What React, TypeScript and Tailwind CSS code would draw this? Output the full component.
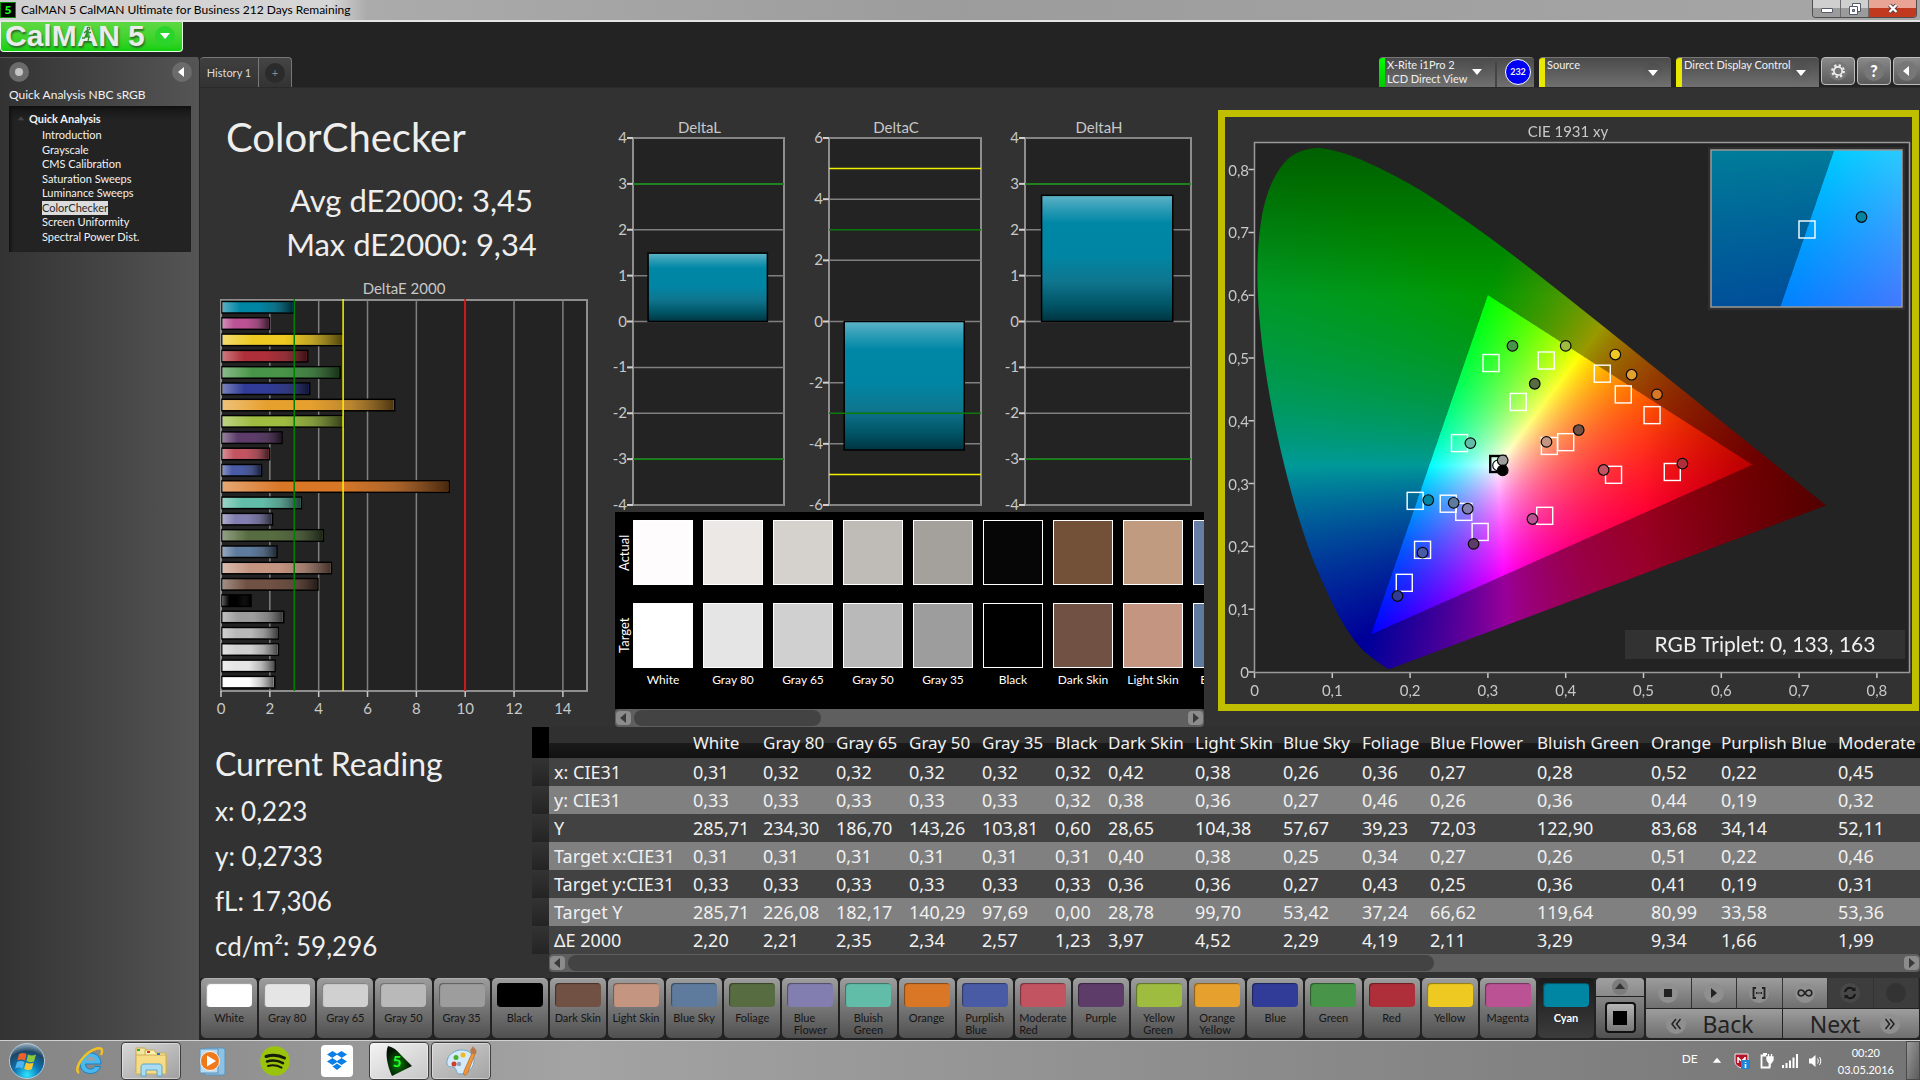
import React, { useEffect, useRef, useState } from 'react';

type Reading = { name: string; lines?: string[]; color: string; actual?: string; de: number };

const patches: Reading[] = [
  { name: 'White', color: '#ffffff', actual: '#fffcfd', de: 2.2 },
  { name: 'Gray 80', color: '#e5e5e5', actual: '#ece8e5', de: 2.21 },
  { name: 'Gray 65', color: '#d0d0d0', actual: '#d5d2cd', de: 2.35 },
  { name: 'Gray 50', color: '#b9b9b9', actual: '#bfbbb6', de: 2.34 },
  { name: 'Gray 35', color: '#9d9d9d', actual: '#a4a09b', de: 2.57 },
  { name: 'Black', color: '#000000', actual: '#060607', de: 1.23 },
  { name: 'Dark Skin', color: '#715143', actual: '#735138', de: 3.97 },
  { name: 'Light Skin', color: '#c49581', actual: '#c09b80', de: 4.52 },
  { name: 'Blue Sky', color: '#5e7b9d', actual: '#687da3', de: 2.29 },
  { name: 'Foliage', color: '#576c40', de: 4.19 },
  { name: 'Blue Flower', lines: ['Blue', 'Flower'], color: '#827fb0', de: 2.11 },
  { name: 'Bluish Green', lines: ['Bluish', 'Green'], color: '#62bda8', de: 3.29 },
  { name: 'Orange', color: '#d97727', de: 9.34 },
  { name: 'Purplish Blue', lines: ['Purplish', 'Blue'], color: '#4a5ba5', de: 1.66 },
  { name: 'Moderate Red', lines: ['Moderate', 'Red'], color: '#c25461', de: 1.99 },
  { name: 'Purple', color: '#5d3c6a', de: 2.5 },
  { name: 'Yellow Green', lines: ['Yellow', 'Green'], color: '#9dbc40', de: 5.02 },
  { name: 'Orange Yellow', lines: ['Orange', 'Yellow'], color: '#e6a02e', de: 7.11 },
  { name: 'Blue', color: '#303c97', de: 3.63 },
  { name: 'Green', color: '#489448', de: 4.87 },
  { name: 'Red', color: '#ae2f39', de: 3.55 },
  { name: 'Yellow', color: '#edc921', de: 5.0 },
  { name: 'Magenta', color: '#bb5294', de: 1.98 },
  { name: 'Cyan', color: '#0085a3', de: 2.96 },
];

const columns: [string, string, string, string, string, string, string, string][] = [
  ['White', '0,31', '0,33', '285,71', '0,31', '0,33', '285,71', '2,20'],
  ['Gray 80', '0,32', '0,33', '234,30', '0,31', '0,33', '226,08', '2,21'],
  ['Gray 65', '0,32', '0,33', '186,70', '0,31', '0,33', '182,17', '2,35'],
  ['Gray 50', '0,32', '0,33', '143,26', '0,31', '0,33', '140,29', '2,34'],
  ['Gray 35', '0,32', '0,33', '103,81', '0,31', '0,33', '97,69', '2,57'],
  ['Black', '0,32', '0,32', '0,60', '0,31', '0,33', '0,00', '1,23'],
  ['Dark Skin', '0,42', '0,38', '28,65', '0,40', '0,36', '28,78', '3,97'],
  ['Light Skin', '0,38', '0,36', '104,38', '0,38', '0,36', '99,70', '4,52'],
  ['Blue Sky', '0,26', '0,27', '57,67', '0,25', '0,27', '53,42', '2,29'],
  ['Foliage', '0,36', '0,46', '39,23', '0,34', '0,43', '37,24', '4,19'],
  ['Blue Flower', '0,27', '0,26', '72,03', '0,27', '0,25', '66,62', '2,11'],
  ['Bluish Green', '0,28', '0,36', '122,90', '0,26', '0,36', '119,64', '3,29'],
  ['Orange', '0,52', '0,44', '83,68', '0,51', '0,41', '80,99', '9,34'],
  ['Purplish Blue', '0,22', '0,19', '34,14', '0,22', '0,19', '33,58', '1,66'],
  ['Moderate Red', '0,45', '0,32', '52,11', '0,46', '0,31', '53,36', '1,99'],
];
const colWidths = [17, 139, 70, 73, 73, 73, 73, 53, 87, 88, 79, 68, 107, 114, 70, 117, 119];
const rowNames = ['x: CIE31', 'y: CIE31', 'Y', 'Target x:CIE31', 'Target y:CIE31', 'Target Y', 'ΔE 2000'];

const locus: [number, number][] = [
  [0.1741, 0.005], [0.1714, 0.0051], [0.1644, 0.0109], [0.1566, 0.0177], [0.144, 0.0297], [0.1355, 0.0399],
  [0.1241, 0.0578], [0.1096, 0.0868], [0.0913, 0.1327], [0.0687, 0.2007], [0.0454, 0.295], [0.0235, 0.4127],
  [0.0082, 0.5384], [0.0039, 0.6548], [0.0139, 0.7502], [0.0389, 0.812], [0.0743, 0.8338], [0.1142, 0.8262],
  [0.1547, 0.8059], [0.1929, 0.7816], [0.2296, 0.7543], [0.3016, 0.6923], [0.3731, 0.6245], [0.4441, 0.5547],
  [0.5125, 0.4866], [0.5752, 0.4242], [0.627, 0.3725], [0.6915, 0.3083], [0.719, 0.2809], [0.7347, 0.2653],
];

const targets: [number, number][] = [
  [0.304, 0.492], [0.375, 0.496], [0.339, 0.43], [0.447, 0.475], [0.474, 0.442], [0.511, 0.409],
  [0.2635, 0.3645], [0.379, 0.36], [0.4, 0.366], [0.4615, 0.314], [0.537, 0.3185], [0.2065, 0.2725],
  [0.249, 0.268], [0.269, 0.255], [0.29, 0.223], [0.373, 0.2487], [0.216, 0.1945], [0.1925, 0.142],
];
const measured: [number, number, string][] = [
  [0.3316, 0.5193, '#489448'], [0.4, 0.5193, '#9dbc40'], [0.4638, 0.5055, '#edc921'], [0.4847, 0.4734, '#e6a02e'],
  [0.5173, 0.442, '#d97727'], [0.3602, 0.459, '#576c40'], [0.2775, 0.3645, '#62bda8'], [0.3753, 0.3664, '#c49581'],
  [0.4167, 0.3853, '#715143'], [0.4487, 0.3217, '#c25461'], [0.55, 0.3317, '#ae2f39'], [0.2234, 0.2738, '#0085a3'],
  [0.256, 0.2694, '#5e7b9d'], [0.274, 0.26, '#827fb0'], [0.2816, 0.204, '#5d3c6a'], [0.3573, 0.2436, '#bb5294'],
  [0.216, 0.19, '#4a5ba5'], [0.1838, 0.121, '#303c97'], [0.313, 0.329, '#ffffff'], [0.319, 0.337, '#9d9d9d'],
  [0.319, 0.321, '#000000'],
];

/* ---------- CIE colour field ---------- */

const X0 = 29.5;
const Y0 = 555;
const SX = 778;
const SY = 628;
const px = (x: number) => X0 + x * SX;
const py = (y: number) => Y0 - y * SY;

function side(ax: number, ay: number, bx: number, by: number, x: number, y: number) {
  return (bx - ax) * (y - ay) - (by - ay) * (x - ax);
}

function chromaColor(x: number, y: number): [number, number, number] {
  const X = x / y;
  const Z = (1 - x - y) / y;
  const r = Math.max(0, 3.2406 * X - 1.5372 - 0.4986 * Z);
  const g = Math.max(0, -0.9689 * X + 1.8758 + 0.0415 * Z);
  const b = Math.max(0, 0.0557 * X - 0.204 + 1.057 * Z);
  const inside =
    side(0.15, 0.06, 0.64, 0.33, x, y) > 0 &&
    side(0.64, 0.33, 0.3, 0.6, x, y) > 0 &&
    side(0.3, 0.6, 0.15, 0.06, x, y) > 0;
  let k = inside ? 255 : 153;
  k *= 1 - Math.max(0, x - 0.5) * 2;
  k *= 1 - Math.max(0, y - 0.6) * 1.6;
  const m = Math.max(r, g, b) || 1;
  return [(r / m) * k, (g / m) * k, (b / m) * k];
}

function paintField(
  ctx: CanvasRenderingContext2D,
  left: number, top: number, w: number, h: number,
  toX: (u: number) => number, toY: (v: number) => number, clip: boolean,
) {
  const s = 2;
  const off = document.createElement('canvas');
  off.width = w * s;
  off.height = h * s;
  const o = off.getContext('2d')!;
  const img = o.createImageData(off.width, off.height);
  for (let j = 0; j < off.height; j++) {
    const y = Math.max(0.001, toY(top + (j + 0.5) / s));
    for (let i = 0; i < off.width; i++) {
      const c = chromaColor(toX(left + (i + 0.5) / s), y);
      const p = (j * off.width + i) * 4;
      img.data[p] = c[0];
      img.data[p + 1] = c[1];
      img.data[p + 2] = c[2];
      img.data[p + 3] = 255;
    }
  }
  o.putImageData(img, 0, 0);
  if (clip) {
    o.globalCompositeOperation = 'destination-in';
    o.setTransform(s, 0, 0, s, -left * s, -top * s);
    const q = locus.map(([a, b]) => [px(a), py(b)]);
    o.beginPath();
    o.moveTo(q[0][0], q[0][1]);
    for (let i = 0; i < q.length - 1; i++) {
      const a = q[Math.max(0, i - 1)], b = q[i], c = q[i + 1], d = q[Math.min(q.length - 1, i + 2)];
      o.bezierCurveTo(
        b[0] + (c[0] - a[0]) / 6, b[1] + (c[1] - a[1]) / 6,
        c[0] - (d[0] - b[0]) / 6, c[1] - (d[1] - b[1]) / 6, c[0], c[1],
      );
    }
    o.closePath();
    o.fill();
  }
  ctx.drawImage(off, left, top, w, h);
}

function CieChart() {
  const ref = useRef<HTMLCanvasElement>(null);
  useEffect(() => {
    const ctx = ref.current!.getContext('2d')!;
    ctx.setTransform(2, 0, 0, 2, 0, 0);
    ctx.fillStyle = '#232323';
    ctx.fillRect(30, 26, 654, 529);
    paintField(ctx, 30, 26, 600, 529, (u) => (u - X0) / SX, (v) => (Y0 - v) / SY, true);
    ctx.fillStyle = '#2f2f2f';
    ctx.fillRect(483, 30, 197, 163);
    paintField(ctx, 486, 33, 191, 157, (u) => 0.208 + (u - 581.5) / 3300, (v) => 0.2695 - (v - 112) / 2670, false);
  }, []);
  const ticks = [0, 1, 2, 3, 4, 5, 6, 7, 8];
  const label = (t: number) => (t ? `0,${t}` : '0');
  return (
    <div className="relative border-[7px] border-[#bfbf00] bg-[#323232]">
      <canvas ref={ref} width={1374} height={1174} className="absolute inset-0 h-full w-full" />
      <svg viewBox="0 0 687 587" className="relative block h-auto w-full" role="img" aria-label="CIE 1931 xy chart">
        <g fill="#c8c8c8" fontSize="15">
          <text x="343" y="20" textAnchor="middle">CIE 1931 xy</text>
          {ticks.map((t) => (
            <g key={t}>
              <text x={px(t / 10)} y="579" textAnchor="middle">{label(t)}</text>
              <text x="24" y={py(t / 10) + 6} textAnchor="end">{label(t)}</text>
              <path d={`M${px(t / 10)} 555v6M${X0} ${py(t / 10)}h-6`} stroke="#c8c8c8" strokeWidth="1.5" />
            </g>
          ))}
        </g>
        <rect x="29.5" y="25.5" width="655" height="530" fill="none" stroke="#9a9a9a" strokeWidth="1.5" />
        <rect x="486" y="33" width="191" height="157" fill="none" stroke="#9a9a9a" strokeWidth="1.5" />
        <g fill="none" stroke="#fff" strokeWidth="1.4">
          {targets.map(([x, y]) => (
            <rect key={`${x}-${y}`} x={px(x) - 8} y={py(y) - 8.5} width="16" height="17" />
          ))}
          <rect x="574" y="104" width="16" height="17" />
        </g>
        <rect x={px(0.312) - 7} y={py(0.332) - 7.5} width="15" height="16" fill="none" stroke="#000" strokeWidth="2.4" />
        <g stroke="#0a0a0a" strokeWidth="1.2">
          {measured.map(([x, y, c]) => (
            <circle key={`${x}-${y}`} cx={px(x)} cy={py(y)} r="5.3" fill={c} />
          ))}
          <circle cx="636.5" cy="100" r="5.3" fill="#0085a3" />
        </g>
        <rect x="400" y="513" width="280" height="29" fill="#323232" />
        <text x="540" y="535" textAnchor="middle" fontSize="21" fill="#f0f0f0">RGB Triplet: 0, 133, 163</text>
      </svg>
    </div>
  );
}

/* ---------- Bar charts ---------- */

function DeltaEChart() {
  const k = 24.42;
  const list = [...patches].reverse();
  return (
    <svg viewBox="0 0 405 455" className="block h-auto w-full" role="img" aria-label="DeltaE 2000 chart">
      <defs>
        <linearGradient id="shadeX">
          <stop offset="0" stopColor="#fff" stopOpacity=".36" />
          <stop offset=".26" stopColor="#fff" stopOpacity="0" />
          <stop offset=".52" stopColor="#333" stopOpacity="0" />
          <stop offset=".75" stopColor="#333" stopOpacity=".25" />
          <stop offset="1" stopColor="#000" stopOpacity=".66" />
        </linearGradient>
      </defs>
      <text x="204" y="25" textAnchor="middle" fontSize="15" fill="#c8c8c8">DeltaE 2000</text>
      <rect x="21" y="31" width="366" height="391" fill="#232323" stroke="#8e8e8e" strokeWidth="2" />
      {[2, 4, 6, 8, 10, 12, 14].map((t) => (
        <path key={t} d={`M${21 + t * k} 31v391`} stroke="#808080" strokeWidth="1.5" />
      ))}
      {[0, 2, 4, 6, 8, 10, 12, 14].map((t) => (
        <g key={t}>
          <path d={`M${21 + t * k} 422v6`} stroke="#c8c8c8" strokeWidth="1.5" />
          <text x={21 + t * k} y="445" textAnchor="middle" fontSize="15" fill="#c8c8c8">{t}</text>
        </g>
      ))}
      {list.map((p, i) => (
        <g key={p.name}>
          <rect x="22" y={32.5 + i * 16.3} width={p.de * k - 1} height="11.5" fill={p.color} stroke="#000" strokeWidth="1.5" />
          <rect x="22" y={33.2 + i * 16.3} width={p.de * k - 2} height="10" fill="url(#shadeX)" />
        </g>
      ))}
      <path d={`M${21 + 3 * k} 30v392`} stroke="#008000" strokeWidth="1.5" />
      <path d={`M${21 + 5 * k} 30v392`} stroke="#f6f600" strokeWidth="1.5" />
      <path d={`M${21 + 10 * k} 30v392`} stroke="#f00808" strokeWidth="1.8" />
    </svg>
  );
}

function DeltaChart({ title, width, plot, max, step, value, limits }: {
  title: string; width: number; plot: number; max: number; step: number; value: number; limits: [number, string][];
}) {
  const left = 28;
  const top = 25;
  const h = 367;
  const at = (v: number) => top + ((max - v) / (2 * max)) * h;
  const ticks: number[] = [];
  for (let v = max; v >= -max; v -= step) ticks.push(v);
  const y = Math.min(at(value), at(0));
  const bh = Math.abs(at(value) - at(0));
  const id = `shade-${title}`;
  return (
    <svg viewBox={`0 0 ${width} 399`} className="block h-auto w-full overflow-visible" role="img" aria-label={`${title} chart`}>
      <defs>
        <linearGradient id={id} x2="0" y2="1">
          <stop offset="0" stopColor="#5fb3c6" />
          <stop offset=".1" stopColor="#2f9db6" />
          <stop offset=".22" stopColor="#0087a6" />
          <stop offset=".48" stopColor="#0086a4" />
          <stop offset=".68" stopColor="#0f768f" />
          <stop offset=".88" stopColor="#005263" />
          <stop offset="1" stopColor="#003440" />
        </linearGradient>
      </defs>
      <text x={left + plot / 2 - 9} y="20" textAnchor="middle" fontSize="15" fill="#c8c8c8">{title}</text>
      <rect x={left} y={top} width={plot} height={h} fill="#232323" stroke="#8e8e8e" strokeWidth="2" />
      {ticks.map((v) => (
        <g key={v}>
          <path d={`M${left} ${at(v)}h${plot}`} stroke="#808080" strokeWidth="1.5" />
          <path d={`M${left} ${at(v)}h-6`} stroke="#d0d0d0" strokeWidth="2" />
          <text x={left - 6} y={at(v) + 5} textAnchor="end" fontSize="15" fill="#c8c8c8">{v}</text>
        </g>
      ))}
      <rect x={left + plot * 0.1} y={y} width={plot * 0.79} height={bh} fill={`url(#${id})`} stroke="#000" strokeWidth="1.5" />
      {limits.map(([v, c]) => (
        <path key={v} d={`M${left} ${at(v)}h${plot}`} stroke={c} strokeWidth="1.5" />
      ))}
    </svg>
  );
}

/* ---------- Small parts ---------- */

function Caret({ dir, className }: { dir: 'left' | 'right' | 'up' | 'down'; className?: string }) {
  const d = { left: 'M8 1 2 6l6 5z', right: 'M3 1l6 5-6 5z', up: 'M1 8l5-6 5 6z', down: 'M1 3h10L6 9z' }[dir];
  return (
    <svg viewBox="0 0 12 12" className={`size-3 fill-current ${className ?? ''}`} aria-hidden="true">
      <path d={d} />
    </svg>
  );
}

function ScrollBar({ thumb, label }: { thumb: string; label: string }) {
  const cap = 'flex h-[14px] w-[15px] shrink-0 items-center justify-center rounded bg-[#8c8c8c] text-[#3a3a3a]';
  return (
    <div className="flex h-[18px] items-center gap-[3px] rounded-sm bg-[#5f5f5f] px-px" aria-label={label}>
      <button className={cap} aria-label="Scroll left"><Caret dir="left" /></button>
      <div className="flex-1">
        <div className={`h-4 rounded-lg bg-[#434343] ${thumb}`} />
      </div>
      <button className={cap} aria-label="Scroll right"><Caret dir="right" /></button>
    </div>
  );
}

function RoundCaret() {
  return (
    <span className="flex size-5 shrink-0 items-center justify-center rounded-full bg-linear-to-b from-[#4d4d4d] to-[#6a6a6a] text-white">
      <Caret dir="down" />
    </span>
  );
}

function TitleBar() {
  return (
    <header className="flex h-[22px] items-start justify-between border-b-2 border-[#e4e4e4] bg-linear-to-r from-[#b4b4b4] via-[#9c9c9c] to-[#a6a6a6]">
      <div className="flex h-full items-center gap-[5px] bg-linear-to-r from-[#cfcfcf] via-[#d6d6d6] via-90% to-[#b0b0b0]/0 pr-4 text-xs text-black">
        <span className="flex size-4 items-center justify-center bg-black text-xs leading-4 font-black text-[#19ff19] ring-1 ring-[#0b8f0b] ring-inset">5</span>
        CalMAN 5 CalMAN Ultimate for Business 212 Days Remaining
      </div>
      <div className="mr-[3px] flex h-[18px] overflow-hidden rounded-b border border-t-0 border-[#4e4e4e]">
        <button aria-label="Minimize" className="flex w-7 items-center justify-center border-r border-[#6a6a6a] bg-linear-to-b from-[#cfcfcf] from-50% to-[#9b9b9b] to-50%">
          <span className="mt-1 h-[5px] w-3 rounded-[1px] border border-[#555a6c] bg-white" />
        </button>
        <button aria-label="Restore" className="flex w-7 items-center justify-center border-r border-[#6a6a6a] bg-linear-to-b from-[#cfcfcf] from-50% to-[#9b9b9b] to-50%">
          <svg viewBox="0 0 14 12" className="h-3 w-3.5" fill="#fff" stroke="#555a6c">
            <path d="M4.5.5h8v8h-8z" />
            <path d="M1.5 3.5h8v8h-8z" />
            <path d="M4.5 6.5h2v2h-2z" fill="#9b9b9b" />
          </svg>
        </button>
        <button aria-label="Close" className="flex w-[47px] items-center justify-center bg-linear-to-b from-[#e9a495] from-45% to-[#c13a1f] to-50%">
          <svg viewBox="0 0 12 11" className="h-[11px] w-3">
            <path d="M2.5 2l7 7M9.5 2l-7 7" stroke="#5a3a3a" strokeWidth="4" />
            <path d="M2.5 2l7 7M9.5 2l-7 7" stroke="#fff" strokeWidth="2.4" />
          </svg>
        </button>
      </div>
    </header>
  );
}

const treeItems = ['Introduction', 'Grayscale', 'CMS Calibration', 'Saturation Sweeps', 'Luminance Sweeps', 'ColorChecker', 'Screen Uniformity', 'Spectral Power Dist.'];

function Sidebar() {
  const [active, setActive] = useState('ColorChecker');
  return (
    <aside className="w-[200px] shrink-0 rounded-tr border-t border-r border-t-[#555] border-r-[#262626] bg-linear-to-r from-[#333] to-[#555] px-[9px] pt-1 text-[11px] text-[#f2f2f2]">
      <div className="-mr-0.5 flex items-center justify-between">
        <button aria-label="Options" className="flex size-5 items-center justify-center rounded-full bg-[#6b6b6b]">
          <span className="size-2 rounded-full bg-[#c4c4c4]" />
        </button>
        <button aria-label="Collapse panel" className="flex size-5 items-center justify-center rounded-full bg-[#6b6b6b] text-white"><Caret dir="left" /></button>
      </div>
      <h2 className="mt-0.5 text-[12px] leading-[22px]">Quick Analysis NBC sRGB</h2>
      <nav className="-mr-px h-[146px] bg-linear-to-b from-[#151515] to-[#232323] to-10% pt-1.5 shadow-[inset_2px_2px_3px_#111]">
        <div className="flex items-center font-bold">
          <Caret dir="up" className="mr-1 ml-2 size-2! text-[#444]" />
          <span className="leading-[14px]">Quick Analysis</span>
        </div>
        <ul className="mt-0.5 ml-[33px] flex h-[116px] flex-col justify-between">
          {treeItems.map((t) => (
            <li key={t} className="flex">
              <button onClick={() => setActive(t)} className={t === active ? 'bg-[#dcdcdc] leading-[14px] text-[#2a2a2a]' : 'leading-[14px]'}>{t}</button>
            </li>
          ))}
        </ul>
      </nav>
    </aside>
  );
}

function Device({ width, bar, children }: { width: string; bar: string; children: React.ReactNode }) {
  return (
    <div className={`flex h-[30px] items-start overflow-hidden rounded-t border-t border-[#777] bg-linear-to-b from-[#4b4b4b] to-[#707070] ${width}`}>
      <span className={`mr-0.5 h-full w-1.5 shrink-0 ${bar}`} />
      {children}
    </div>
  );
}

function TabRow() {
  const square = 'flex h-7 w-[34px] shrink-0 items-center justify-center rounded border border-[#bdbdbd] bg-linear-to-b from-[#8a8a8a] to-[#5a5a5a] text-white';
  return (
    <div className="flex h-[31px] items-start justify-between overflow-hidden border-b border-[#2a2a2a] bg-[#232323] text-[11px] leading-[14px] text-[#f0f0f0]">
      <div className="flex h-full" role="tablist">
        <button role="tab" aria-selected="true" className="w-[59px] rounded-tl border-t border-r border-[#777] bg-linear-to-b from-[#3f3f3f] to-[#333] text-center text-[#dcdcdc]">History 1</button>
        <button aria-label="Add history" className="flex w-[33px] items-center justify-center rounded-tr border-t border-r border-[#777] bg-linear-to-b from-[#454545] to-[#333]">
          <span className="flex size-5 items-center justify-center rounded-full bg-[#2b2b2b] text-[#8c8c8c]">+</span>
        </button>
      </div>
      <div className="flex">
        <Device width="w-[155px]" bar="bg-linear-to-b from-[#00ff00] to-[#00c800]">
          <span className="w-[90px]">X-Rite i1Pro 2<br />LCD Direct View</span>
          <span className="mt-1 -ml-2.5"><RoundCaret /></span>
          <span className="mt-1 ml-2 h-full w-0.5 bg-[#444]" />
          <span className="mt-px ml-2 flex size-[26px] items-center justify-center rounded-full border border-white bg-[#0000f5] text-[9px] font-bold">232</span>
        </Device>
        <span className="w-[5px]" />
        <Device width="w-[132px]" bar="bg-[#e8e800]">
          <span className="flex-1">Source</span>
          <span className="mt-[5px] mr-2"><RoundCaret /></span>
        </Device>
        <span className="w-[5px]" />
        <Device width="w-[143px]" bar="bg-[#e8e800]">
          <span className="flex-1 whitespace-nowrap">Direct Display Control</span>
          <span className="mt-[5px] mr-2"><RoundCaret /></span>
        </Device>
        <div className="ml-0.5 flex gap-0.5">
          <button className={square} aria-label="Settings">
            <svg viewBox="0 0 20 20" className="size-5" fill="none" stroke="#f0f0f0">
              <circle cx="10" cy="10" r="9.5" fill="#777" stroke="none" />
              <circle cx="10" cy="10" r="4.2" strokeWidth="1.7" />
              <circle cx="10" cy="10" r="5.9" strokeWidth="2" strokeDasharray="2.3 2.33" />
            </svg>
          </button>
          <button className={square} aria-label="Help">
            <span className="flex size-5 items-center justify-center rounded-full bg-[#777] text-base font-black">?</span>
          </button>
          <button className="-mr-[7px] flex h-7 w-[34px] shrink-0 items-center justify-center rounded border border-[#bdbdbd] bg-linear-to-b from-[#8a8a8a] to-[#5a5a5a] pr-1.5 text-white" aria-label="Collapse">
            <span className="flex size-5 items-center justify-center rounded-full bg-[#777]"><Caret dir="left" /></span>
          </button>
        </div>
      </div>
    </div>
  );
}

function SwatchPanel() {
  return (
    <div className="ml-2.5">
      <div className="relative h-[197px] overflow-hidden bg-black text-[12px] text-white">
        <div className="flex gap-2.5 pt-2 whitespace-nowrap">
          <div className="-mr-2.5 flex w-[18px] shrink-0 flex-col gap-[18px]">
            {['Actual', 'Target'].map((t) => (
              <span key={t} className="flex h-[65px] rotate-180 items-center justify-center text-[13px] leading-[18px] [writing-mode:vertical-rl]">{t}</span>
            ))}
          </div>
          {patches.slice(0, 9).map((p) => (
            <div key={p.name} className="w-[60px] shrink-0">
              <div className="h-[65px] border border-white" style={{ backgroundColor: p.actual }} />
              <div className="mt-[18px] h-[65px] border border-white" style={{ backgroundColor: p.color }} />
              <div className="mt-0.5 text-center leading-5">{p.name}</div>
            </div>
          ))}
        </div>
      </div>
      <ScrollBar thumb="w-[34%]" label="Swatches" />
    </div>
  );
}

function DataTable() {
  return (
    <div className="min-w-0 flex-1">
      <div className="overflow-hidden">
        <table className="w-[1420px] table-fixed border-collapse font-['Noto_Sans',sans-serif] text-[17px] whitespace-nowrap text-[#f0f0f0]">
          <colgroup>
            {colWidths.map((w, i) => <col key={i} style={{ width: w }} />)}
          </colgroup>
          <thead>
            <tr className="h-[31px] bg-linear-to-b from-[#303030] from-50% via-[#1b1b1b] via-50% to-[#111]">
              <td className="bg-black p-0" />
              <td className="p-0" />
              {columns.map((c) => (
                <th key={c[0]} scope="col" className="p-0 pl-[5px] text-left text-[17px] leading-7 font-normal">{c[0]}</th>
              ))}
            </tr>
          </thead>
          <tbody>
            {rowNames.map((r, i) => (
              <tr key={r} className={i % 2 ? 'h-7 bg-[#808080]' : 'h-7 bg-[#424242]'}>
                <td className="bg-linear-to-b from-[#333] to-[#242424] p-0" />
                <th scope="row" className="p-0 pl-[5px] text-left text-[18px] leading-7 font-normal">{r}</th>
                {columns.map((c) => <td key={c[0]} className="p-0 pl-[5px] text-[18px] leading-7">{c[i + 1]}</td>)}
              </tr>
            ))}
          </tbody>
        </table>
      </div>
      <div className="ml-[17px]"><ScrollBar thumb="w-[65%]" label="Results" /></div>
    </div>
  );
}

function PatchStrip() {
  const [selected, setSelected] = useState('Cyan');
  const cell = 'flex h-[30px] flex-1 items-center justify-center border-r border-[#333]';
  const live = 'bg-linear-to-b from-[#9d9d9d] to-[#6f6f6f] text-[#222]';
  const knob = 'flex size-5 items-center justify-center rounded-full bg-[#8f8f8f]';
  return (
    <div className="flex h-[62px] gap-0.5 bg-[#222] pr-px pb-[2px] pl-px">
      <div className="flex flex-1 gap-0.5">
        {patches.map((p) => (
          <button
            key={p.name}
            onClick={() => setSelected(p.name)}
            className={`flex min-w-0 flex-1 flex-col items-center rounded-[5px] border-t pt-1 text-[11px] leading-3 ${
              p.name === selected
                ? 'border-[#1c1c1c] bg-linear-to-b from-[#1c1c1c] to-[#3c3c3c] font-bold text-white'
                : 'border-[#b0b0b0] bg-linear-to-b from-[#9c9c9c] to-[#505050] text-[#161616]'
            }`}
          >
            <span className="h-6 w-[46px] shrink-0 rounded shadow-[inset_1px_1px_1px_#0006]" style={{ backgroundColor: p.color }} />
            <span className="mt-[5px] text-left whitespace-nowrap">
              {(p.lines ?? [p.name]).map((l) => <span key={l} className="block">{l}</span>)}
            </span>
          </button>
        ))}
      </div>
      <div className="flex w-[48px] flex-col gap-px">
        <button aria-label="Expand" className="flex h-[18px] items-center justify-center rounded-t bg-linear-to-b from-[#a0a0a0] to-[#8a8a8a] text-[#333]">
          <span className="flex size-4 items-center justify-center rounded-full bg-[#7c7c7c]"><Caret dir="up" /></span>
        </button>
        <button aria-label="Show pattern" className="flex flex-1 items-center justify-center rounded-b bg-linear-to-b from-[#858585] to-[#505050]">
          <span className="flex h-[31px] w-[31px] items-center justify-center rounded border-2 border-[#111] bg-linear-to-b from-[#b5b5b5] to-[#777]">
            <span className="size-3.5 bg-black" />
          </span>
        </button>
      </div>
      <div className="flex w-[273px] flex-col gap-px">
        <div className="flex">
          <button aria-label="Stop" className={`${cell} ${live}`}><span className={knob}><span className="size-2 bg-[#222]" /></span></button>
          <button aria-label="Play" className={`${cell} ${live}`}><span className={knob}><Caret dir="right" /></span></button>
          <button aria-label="Read range" className={`${cell} ${live}`}>
            <span className={knob}>
              <svg viewBox="0 0 14 12" className="h-3 w-3.5" fill="none" stroke="#222" strokeWidth="1.8"><path d="M4 1H1.5v10H4M10 1h2.5v10H10M4 6h1.5M6.5 6h1M8.5 6H10" /></svg>
            </span>
          </button>
          <button aria-label="Continuous" className={`${cell} ${live}`}>
            <span className={knob}>
              <svg viewBox="0 0 16 8" className="h-2 w-4" fill="none" stroke="#222" strokeWidth="1.6"><path d="M8 4C6.5 1.5 5.5 1 4.2 1a3 3 0 000 6C5.5 7 6.5 6.5 8 4s2.5-3 3.8-3a3 3 0 010 6C10.5 7 9.5 6.5 8 4z" /></svg>
            </span>
          </button>
          <button aria-label="Refresh" className={`${cell} bg-[#3d3d3d]`}>
            <span className="flex size-5 items-center justify-center rounded-full bg-[#484848]">
              <svg viewBox="0 0 14 14" className="size-3.5" fill="none" stroke="#181818" strokeWidth="2"><path d="M2 6a5 5 0 019-2M12 8a5 5 0 01-9 2" /><path d="M12.5 1v4h-4zM1.5 13V9h4z" fill="#181818" stroke="none" /></svg>
            </span>
          </button>
          <button aria-label="Record" className={`${cell} bg-[#3d3d3d]`}><span className="size-5 rounded-full bg-[#333]" /></button>
        </div>
        <div className="flex flex-1 gap-px font-['Noto_Sans',sans-serif] text-[23px] leading-7 text-[#222]">
          <button className={`flex flex-1 items-center justify-center gap-4 rounded-bl pr-2 ${live}`}>
            <span className={knob}>
              <svg viewBox="0 0 12 12" className="size-3" fill="none" stroke="#222" strokeWidth="1.5"><path d="M6 1 2 6l4 5M10.5 1l-4 5 4 5" /></svg>
            </span>
            Back
          </button>
          <button className={`flex flex-1 items-center justify-center gap-5 rounded-br pl-2 ${live}`}>
            Next
            <span className={knob}>
              <svg viewBox="0 0 12 12" className="size-3" fill="none" stroke="#222" strokeWidth="1.5"><path d="M1.5 1l4 5-4 5M6 1l4 5-4 5" /></svg>
            </span>
          </button>
        </div>
      </div>
    </div>
  );
}

/* ---------- Task bar ---------- */

function Taskbar() {
  const open = 'flex h-[38px] w-[60px] items-center justify-center rounded-sm border border-[#3f3f3f] ring-1 ring-white/40 ring-inset';
  return (
    <footer className="flex h-10 items-center justify-between border-t border-[#d0d0d0] bg-linear-to-r from-[#858585] via-[#a3a3a3] via-30% to-[#757575]">
      <div className="flex h-full items-center">
        <button aria-label="Start" className="ml-2 size-[38px]">
          <svg viewBox="0 0 38 38">
            <defs>
              <radialGradient id="orb" cx=".5" cy=".9" r=".9">
                <stop offset="0" stopColor="#2ee6ff" /><stop offset=".4" stopColor="#0c77b5" /><stop offset=".75" stopColor="#1c4665" /><stop offset="1" stopColor="#9db4c4" />
              </radialGradient>
            </defs>
            <circle cx="19" cy="19" r="17.5" fill="url(#orb)" stroke="#b7c9d6" />
            <path d="M11 12c3-1.5 5-1.3 7.5 0l-1.5 6.5c-2.5-1.3-4.5-1.4-7.500 0z" fill="#f0602a" />
            <path d="M20 12.5c2.5 1.2 5 1.2 8 0l-2 7c-2.5 1.2-5 1-7.500-.5z" fill="#8cc83c" />
            <path d="M9 20c3-1.5 5-1.3 7.5 0l-1.8 6.5c-2.5-1.3-4.5-1.4-7.500 0z" fill="#4fb3f0" />
            <path d="M18 20.5c2.5 1.3 5 1.3 7.6.2l-1.9 6.5c-2.6 1.2-5 1-7.500-.4z" fill="#fcc832" />
          </svg>
        </button>
        <button aria-label="Internet Explorer" className="ml-7 h-8 w-8">
          <svg viewBox="0 0 32 32" fill="none">
            <path d="M6 18c0-6 4.5-10 10.5-10S27 12.5 27 19H11.5c.3 3.5 2.2 5 5 5 2 0 3.5-.8 4.2-2.5h5.8c-1.5 4.5-5 7-10 7C10 28.500 6 24.500 6 18z" fill="#4ab8ec" stroke="#1b7fc0" />
            <path d="M12 15.500h9.200c-.3-2.300-2-3.700-4.500-3.700s-4.200 1.400-4.700 3.700z" fill="#a0a0a0" />
            <path d="M5 28C.5 25 6 14 14 8c6-4.500 13-6.500 14-3 .5 1.500 0 3-1 5" stroke="#f4c220" strokeWidth="2.5" />
          </svg>
        </button>
        <button aria-label="Explorer" className={`${open} ml-[15px] bg-linear-to-br from-[#d8d8d8] to-[#a0a0a0]`}>
          <svg viewBox="0 0 36 32" className="h-8 w-9">
            <path d="M3 3h9l2 3h8v21H3z" fill="#f3e6a0" stroke="#c9a94e" />
            <path d="M12 5h9l2 3h10v19H12z" fill="#fbf0b0" stroke="#c9a94e" />
            <path d="M3 10h30v19H3z" fill="#f5dc85" stroke="#cfae55" />
            <path d="M4 4h3v2H4z" fill="#28b428" /><path d="M14 6h3v2h-3z" fill="#d43a2a" /><path d="M24 8h3v2h-3z" fill="#2a7bd4" />
            <path d="M8 31v-9c0-2 1-3 3-3h15c2 0 3 1 3 3v9h-5v-6H13v6z" fill="#a9dcf3" stroke="#5aa6cc" />
          </svg>
        </button>
        <button aria-label="Media Player" className="ml-4 h-8 w-8">
          <svg viewBox="0 0 32 32">
            <path d="M8 3h18l2 1v25l-2 1H8z" fill="#8fc1e4" stroke="#5b93bb" /><path d="M3 4h18v24H3z" fill="#b9dcf2" stroke="#5b93bb" />
            <circle cx="13" cy="16" r="9.5" fill="#ef7a1c" stroke="#fff" strokeWidth=".8" /><path d="M10 10.5l9 5.5-9 5.5z" fill="#fff" />
          </svg>
        </button>
        <button aria-label="Spotify" className="ml-[31px] size-[30px]">
          <svg viewBox="0 0 30 30" fill="none" stroke="#161b07" strokeLinecap="round">
            <circle cx="15" cy="15" r="14.8" fill="#9ac40c" stroke="none" />
            <path d="M6 10.5c6-2 13-1.5 18.5 1.5" strokeWidth="3" /><path d="M7 15.5c5.5-1.6 11-1 16 1.700" strokeWidth="2.5" /><path d="M8 20c4.5-1.3 9-.8 13.5 1.600" strokeWidth="2" />
          </svg>
        </button>
        <button aria-label="Dropbox" className="ml-[31px] flex size-8 items-center justify-center rounded bg-white">
          <svg viewBox="0 0 24 24" className="size-6" fill="#0a7fe6">
            <path d="M7.5 2 2 5.5 7.5 9 13 5.5zM16.5 2 11 5.5 16.5 9 22 5.5zM7.5 9 2 12.5 7.5 16l5.5-3.5zM16.5 9 11 12.5l5.5 3.5 5.5-3.5zM12 14.5 7.5 17.5 12 21l4.5-3.5z" />
            <path d="m12 5.8 4.6 3-4.6 3-4.6-3z" fill="#fff" />
          </svg>
        </button>
        <button aria-label="CalMAN" className={`${open} ml-4 bg-linear-to-br from-[#f4f4f4] to-[#c6c6c6]`}>
          <svg viewBox="0 0 30 32" className="h-8 w-[30px]">
            <defs><radialGradient id="tri" cx=".45" cy=".6"><stop offset="0" stopColor="#0a7a0a" /><stop offset="1" stopColor="#021502" /></radialGradient></defs>
            <path d="M4 1c5 1 9 4 13 9l11 11L8 31C3 20 1 8 4 1z" fill="url(#tri)" />
            <text x="13" y="22" textAnchor="middle" fontSize="15" fontWeight="700" fill="#20ff20">5</text>
          </svg>
        </button>
        <button aria-label="Paint" className={`${open} ml-0.5 bg-linear-to-br from-[#d0d0d0] to-[#a4a4a4]`}>
          <svg viewBox="0 0 34 32" className="h-8 w-[34px]">
            <path d="M16 5c9-1 15 5 14 12s-7 12-14 12c-4 0-3-4-5-6s-7 0-8-4c-1-7 5-13 13-14z" fill="#d3eafa" stroke="#6fa6cc" />
            <circle cx="10" cy="19" r="2.5" fill="#d43a2a" /><circle cx="12" cy="12.5" r="2.5" fill="#4caf2e" /><circle cx="19" cy="10" r="2.5" fill="#f5b91e" /><circle cx="15" cy="19" r="2.2" fill="#8fa4b5" />
            <path d="M20 30c-1-1 0-3 0-4L28 8l3 1-7 18c-1 2-3 4-4 3z" fill="#f0953a" stroke="#a85d17" strokeWidth=".6" />
            <path d="M27 8c-2-4 1-4 2-7 1 3 5 3 3 8z" fill="#b87a4a" />
          </svg>
        </button>
      </div>
      <div className="flex h-full items-center text-[11px] text-white">
        <span className="mr-3.5 -mt-1 text-xs">DE</span>
        <button aria-label="Show hidden icons" className="mr-3"><Caret dir="up" className="size-2.5!" /></button>
        <svg viewBox="0 0 16 16" className="mr-2 size-4" role="img" aria-label="Security">
          <path d="M1 1h13v7c0 4-3 6-6.5 7C4 14 1 12 1 8z" fill="#b4142c" stroke="#eee" />
          <path d="M4 4v6M11 4v6M4 5l3.5 3L11 5" stroke="#fff" strokeWidth="1.5" fill="none" />
          <path d="M7 7h9v9H7z" fill="#1d87d6" /><path d="M11.5 9v1M11.5 11v4" stroke="#fff" strokeWidth="1.6" />
        </svg>
        <svg viewBox="0 0 16 16" className="mr-2 size-4" fill="none" stroke="#fff" role="img" aria-label="Power">
          <path d="M8 2.5H3.5v12h8V11" strokeWidth="1.8" /><path d="M5 1h4" strokeWidth="2" /><path d="M9 4h6v3l-2 3h-2L9 7zM10.5 1v3M13.5 1v3M12 10v4" fill="#fff" strokeWidth="1.3" />
        </svg>
        <svg viewBox="0 0 16 14" className="mr-2.5 h-3.5 w-4" fill="#fff" role="img" aria-label="Network">
          <path d="M0 11h2v3H0zM3.5 9h2v5h-2zM7 6.5h2V14H7zM10.5 3.5h2V14h-2zM14 0h2v14h-2z" />
        </svg>
        <svg viewBox="0 0 14 14" className="mr-4 size-3.5" role="img" aria-label="Volume">
          <path d="M1 4.5h2.5L7.5 1v12L3.5 9.5H1z" fill="#fff" /><path d="M9.5 4.5c1 1.5 1 3.5 0 5M11.5 3c1.7 2.400 1.7 5.600 0 8" stroke="#fff" fill="none" />
        </svg>
        <time className="mr-3 text-center leading-[17px]">00:20<br />03.05.2016</time>
        <button aria-label="Show desktop" className="h-full w-3.5 border border-[#4a4a4a] bg-linear-to-br from-[#9a9a9a] to-[#5c5c5c]" />
      </div>
    </footer>
  );
}

export default function App() {
  return (
    <div className="flex min-h-screen flex-col bg-[#232323] font-['Lato','Open_Sans',sans-serif]">
      <TitleBar />
      <div className="h-[35px]">
        <button aria-label="CalMAN menu" className="flex h-[30px] w-[183px] items-start rounded-b border border-t-0 border-[#e6ffe6] bg-linear-to-b from-[#5ed843] to-[#0ed00e] pl-1 font-['Liberation_Sans',sans-serif] text-[30px] leading-[27px] font-bold text-[#ebebeb] [text-shadow:1px_2px_2px_#2b6b2b]">
          <span>CalM</span>
          <span className="relative">
            A
            <svg viewBox="0 0 12 16" className="absolute top-1 left-1 h-4 w-3" fill="none" stroke="#2f8f2f" strokeWidth="1.3" aria-hidden="true">
              <circle cx="7.5" cy="2.5" r="1.3" />
              <path d="M6.5 4.5 5 9l3 2-1 4M5 9l-1.5 3H1M3 7l3-2.5 2 2h2" />
            </svg>
          </span>
          <span>N</span>
          <span className="ml-2">5</span>
          <span className="mt-1 ml-2.5 flex size-5 items-center justify-center rounded-full bg-[#2bd42b] text-white"><Caret dir="down" /></span>
        </button>
      </div>
      <div className="flex flex-1">
        <Sidebar />
        <main className="flex min-w-0 flex-1 flex-col bg-[#323232] text-[#eeeeee]">
          <TabRow />
          <section className="grid grid-cols-[405fr_599fr_715fr] items-start pr-px">
            <div className="min-w-0 pt-[25px]">
              <h1 className="pl-[26px] text-[40px] leading-[48px]">ColorChecker</h1>
              <div className="mt-[17px] mb-[3px] pl-[18px] text-center text-[31px] leading-[44px]">
                <p>Avg dE2000: 3,45</p>
                <p>Max dE2000: 9,34</p>
              </div>
              <DeltaEChart />
            </div>
            <div className="min-w-0 pt-[25px]">
              <div className="grid grid-cols-[196fr_196fr_207fr]">
                <DeltaChart title="DeltaL" width={196} plot={151} max={4} step={1} value={1.49} limits={[[3, '#0a8a0a'], [-3, '#0a8a0a']]} />
                <DeltaChart title="DeltaC" width={196} plot={152} max={6} step={2} value={-4.2} limits={[[5, '#f0f000'], [3, '#0a7a0a'], [-3, '#0a7a0a'], [-5, '#f0f000']]} />
                <DeltaChart title="DeltaH" width={207} plot={166} max={4} step={1} value={2.75} limits={[[3, '#0a8a0a'], [-3, '#0a8a0a']]} />
              </div>
              <SwatchPanel />
            </div>
            <div className="min-w-0 pt-[22px] pl-3.5">
              <CieChart />
            </div>
          </section>
          <section className="flex flex-1 pb-[5px]">
            <div className="w-[332px] shrink-0 pt-3.5 pl-[15px] text-[26px] leading-[45px]">
              <h2 className="mb-[3px] text-[32px]">Current Reading</h2>
              <p>x: 0,223</p>
              <p>y: 0,2733</p>
              <p>fL: 17,306</p>
              <p>cd/m²: 59,296</p>
            </div>
            <DataTable />
          </section>
          <PatchStrip />
        </main>
      </div>
      <Taskbar />
    </div>
  );
}
